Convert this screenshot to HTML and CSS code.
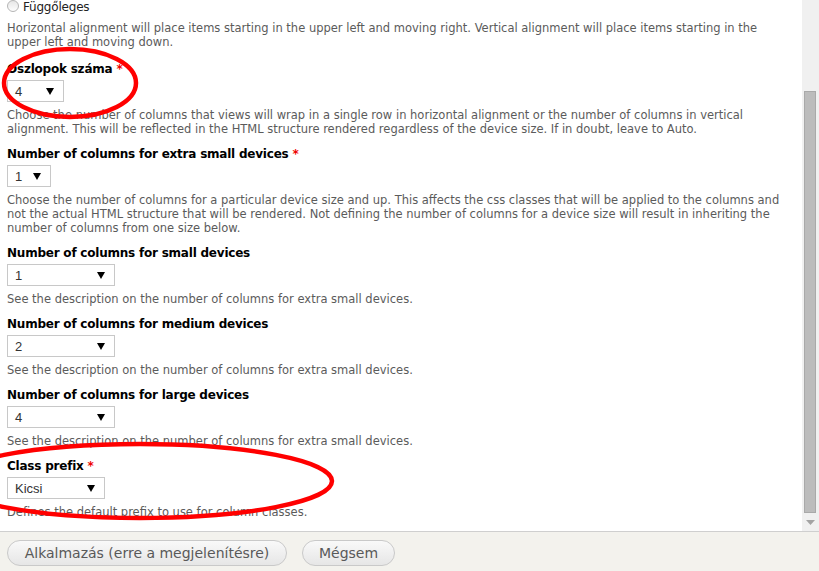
FILE: index.html
```html
<!DOCTYPE html>
<html lang="hu">
<head>
    <meta charset="UTF-8">
    <title>Views - Bootstrap grid beállítások</title>
    <link rel="stylesheet" href="styles.css">
</head>
<body>
    <div class="pane">
        <!-- Scrolled form content -->
        <div class="form-body">
            <div class="radio-row">
                <span class="radio"></span>
                <span class="radio-label">Függőleges</span>
            </div>
            <p class="description">Horizontal alignment will place items starting in the upper left and moving right. Vertical alignment will place items starting in the upper left and moving down.</p>

            <div class="form-item">
                <label class="form-label">Oszlopok száma <span class="required">*</span></label>
                <div class="select select-cols">
                    <span class="select-value">4</span>
                    <svg class="select-arrow" width="8" height="7" viewBox="0 0 8 7"><path d="M0 0h8L4 7z" fill="#000"/></svg>
                </div>
                <p class="description">Choose the number of columns that views will wrap in a single row in horizontal alignment or the number of columns in vertical alignment. This will be reflected in the HTML structure rendered regardless of the device size. If in doubt, leave to Auto.</p>
            </div>

            <div class="form-item">
                <label class="form-label">Number of columns for extra small devices <span class="required">*</span></label>
                <div class="select select-xs">
                    <span class="select-value">1</span>
                    <svg class="select-arrow" width="8" height="7" viewBox="0 0 8 7"><path d="M0 0h8L4 7z" fill="#000"/></svg>
                </div>
                <p class="description">Choose the number of columns for a particular device size and up. This affects the css classes that will be applied to the columns and not the actual HTML structure that will be rendered. Not defining the number of columns for a device size will result in inheriting the number of columns from one size below.</p>
            </div>

            <div class="form-item">
                <label class="form-label">Number of columns for small devices</label>
                <div class="select select-wide">
                    <span class="select-value">1</span>
                    <svg class="select-arrow" width="8" height="7" viewBox="0 0 8 7"><path d="M0 0h8L4 7z" fill="#000"/></svg>
                </div>
                <p class="description">See the description on the number of columns for extra small devices.</p>
            </div>

            <div class="form-item">
                <label class="form-label">Number of columns for medium devices</label>
                <div class="select select-wide">
                    <span class="select-value">2</span>
                    <svg class="select-arrow" width="8" height="7" viewBox="0 0 8 7"><path d="M0 0h8L4 7z" fill="#000"/></svg>
                </div>
                <p class="description">See the description on the number of columns for extra small devices.</p>
            </div>

            <div class="form-item">
                <label class="form-label">Number of columns for large devices</label>
                <div class="select select-wide">
                    <span class="select-value">4</span>
                    <svg class="select-arrow" width="8" height="7" viewBox="0 0 8 7"><path d="M0 0h8L4 7z" fill="#000"/></svg>
                </div>
                <p class="description">See the description on the number of columns for extra small devices.</p>
            </div>

            <div class="form-item">
                <label class="form-label">Class prefix <span class="required">*</span></label>
                <div class="select select-prefix">
                    <span class="select-value">Kicsi</span>
                    <svg class="select-arrow" width="8" height="7" viewBox="0 0 8 7"><path d="M0 0h8L4 7z" fill="#000"/></svg>
                </div>
                <p class="description">Defines the default prefix to use for column classes.</p>
            </div>

            <!-- Red hand-drawn highlight marks -->
            <svg class="marks" width="802" height="531" viewBox="0 0 802 531">
                <ellipse cx="70" cy="83" rx="66" ry="34" fill="none" stroke="#f00" stroke-width="4.5"/>
                <ellipse cx="140" cy="481" rx="192" ry="37" fill="none" stroke="#f00" stroke-width="4.5"/>
            </svg>
        </div>

        <!-- Scrollbar -->
        <div class="scrollbar">
            <div class="scroll-thumb"></div>
            <svg class="scroll-arrow" width="9" height="5" viewBox="0 0 9 5"><path d="M0 0h9L4.5 5z" fill="#a3a3a3"/></svg>
        </div>
    </div>

    <!-- Action buttons -->
    <footer class="actions">
        <button class="btn">Alkalmazás (erre a megjelenítésre)</button>
        <button class="btn">Mégsem</button>
    </footer>
</body>
</html>
```

FILE: styles.css
```css
* {
    margin: 0;
    padding: 0;
    box-sizing: border-box;
}

body {
    width: 819px;
    height: 571px;
    display: flex;
    flex-direction: column;
    overflow: hidden;
    background-color: #fff;
    font-family: "DejaVu Sans", Verdana, sans-serif;
    color: #000;
}

/* Scroll pane */
.pane {
    height: 532px;
    display: flex;
    border-bottom: 1px solid #cfcfcf;
}

.form-body {
    position: relative;
    flex: 1;
    padding: 0 12px 0 7px;
    overflow: hidden;
}

.radio-row {
    display: flex;
    align-items: center;
    gap: 4px;
    height: 13px;
}

.radio {
    width: 12px;
    height: 12px;
    border-radius: 50%;
    border: 1px solid #b5b5b5;
    background: linear-gradient(#e6e6e6, #fdfdfd);
    margin-top: -1px;
}

.radio-label {
    font-size: 12px;
    color: #222;
    letter-spacing: -0.2px;
}

.description {
    font-size: 11.5px;
    line-height: 14px;
    color: #5b5b5b;
    margin-top: 8px;
}

.form-item {
    margin-top: 12px;
}

.form-item + .form-item {
    margin-top: 10px;
}

.form-label {
    display: block;
    font-size: 12px;
    line-height: 16px;
    font-weight: bold;
    letter-spacing: -0.22px;
    margin-bottom: 3px;
}

.required {
    color: #e00;
}

.select {
    display: flex;
    align-items: center;
    justify-content: space-between;
    height: 22px;
    padding: 0 9px 0 7px;
    border: 1px solid #c8c8c8;
    background-color: #fff;
    font-size: 13px;
    color: #333;
    font-family: "Liberation Sans", Arial, sans-serif;
}

.select + .description {
    margin-top: 6px;
}

.select-cols { width: 57px; }
.select-xs { width: 44px; }
.select-wide { width: 108px; }
.select-prefix { width: 98px; }

.marks {
    position: absolute;
    top: 0;
    left: 0;
    pointer-events: none;
}

/* Fake scrollbar */
.scrollbar {
    position: relative;
    width: 17px;
    background-color: #f0f0f0;
}

.scroll-thumb {
    position: absolute;
    top: 91px;
    left: 2px;
    width: 12px;
    height: 422px;
    background-color: #bcbcbc;
    border: 1px solid #a9a9a9;
}

.scroll-arrow {
    position: absolute;
    top: 520px;
    left: 4px;
}

/* Footer buttons */
.actions {
    flex: 1;
    display: flex;
    align-items: flex-start;
    gap: 15px;
    padding: 8px 7px 0;
    background-color: #f3f2ed;
}

.btn {
    height: 26px;
    padding: 0;
    border: 1px solid #c9c9c9;
    border-radius: 13px;
    background: linear-gradient(#f9f9f9, #e6e6e6);
    font-family: "DejaVu Sans", Verdana, sans-serif;
    font-size: 14px;
    color: #595959;
    white-space: nowrap;
    text-align: center;
}

.btn:first-child {
    width: 280px;
}

.btn:last-child {
    width: 93px;
}
```
